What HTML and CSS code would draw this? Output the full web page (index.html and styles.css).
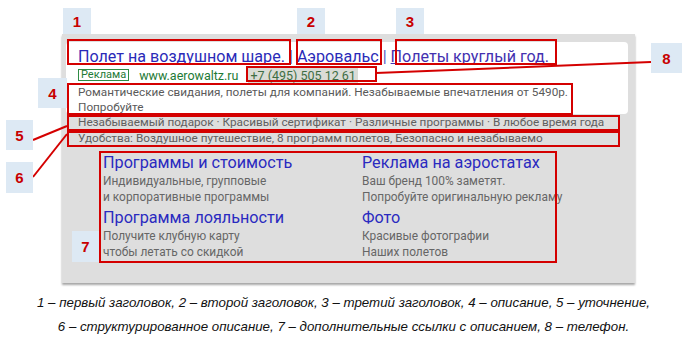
FILE: index.html
```html
<!DOCTYPE html>
<html lang="ru">
<head>
  <meta charset="UTF-8" />
  <meta name="viewport" content="width=device-width, initial-scale=1.0"/>
  <title>Объявление</title>
  <link rel="stylesheet" href="styles.css">
</head>
<body>
  <div class="figure">
    <div class="ad">
      <div class="ad-main">
        <div class="ad-title">
          <a class="t1">Полет на воздушном шаре.</a>
          <span class="sep">|</span>
          <a>Аэровальс</a>
          <span class="sep">|</span>
          <a class="t3">Полеты круглый год.</a>
        </div>
        <div class="ad-url">
          <span class="badge">Реклама</span>
          <span class="domain">www.aerowaltz.ru</span>
          <span class="phone">+7 (495) 505 12 61</span>
        </div>
        <p class="ad-desc">Романтические свидания, полеты для компаний. Незабываемые впечатления от 5490р.<br>Попробуйте</p>
      </div>
      <div class="ad-line">Незабываемый подарок · Красивый сертификат · Различные программы · В любое время года</div>
      <div class="ad-line">Удобства: Воздушное путешествие, 8 программ полетов, Безопасно и незабываемо</div>

      <div class="sitelinks">
        <div class="sitelink">
          <a>Программы и стоимость</a>
          <p>Индивидуальные, групповые<br>и корпоративные программы</p>
        </div>
        <div class="sitelink">
          <a>Реклама на аэростатах</a>
          <p>Ваш бренд 100% заметят.<br>Попробуйте оригинальную рекламу</p>
        </div>
        <div class="sitelink">
          <a>Программа лояльности</a>
          <p>Получите клубную карту<br>чтобы летать со скидкой</p>
        </div>
        <div class="sitelink">
          <a>Фото</a>
          <p>Красивые фотографии<br>Наших полетов</p>
        </div>
      </div>
    </div>

    <p class="caption">
      1 – первый заголовок, 2 – второй заголовок, 3 – третий заголовок, 4 – описание, 5 – уточнение,<br>
      6 – структурированное описание, 7 – дополнительные ссылки с описанием, 8 – телефон.
    </p>

    <!-- annotation overlay -->
    <svg class="lines" width="687" height="343">
      <line x1="376" y1="73" x2="651" y2="62" />
      <line x1="33" y1="140" x2="67" y2="126" />
      <line x1="33" y1="177" x2="67" y2="134" />
    </svg>
    <div class="box b1"></div>
    <div class="box b2"></div>
    <div class="box b3"></div>
    <div class="box b8"></div>
    <div class="box b4"></div>
    <div class="box b5"></div>
    <div class="box b6"></div>
    <div class="box b7"></div>

    <div class="num n1">1</div>
    <div class="num n2">2</div>
    <div class="num n3">3</div>
    <div class="num n8">8</div>
    <div class="num n4">4</div>
    <div class="num n5">5</div>
    <div class="num n6">6</div>
    <div class="num n7">7</div>
  </div>
</body>
</html>
```

FILE: styles.css
```css
body {
  margin: 0;
  background: #fff;
  font-family: Roboto, "Liberation Sans", sans-serif;
}

.figure {
  position: relative;
  width: 687px;
  height: 343px;
  overflow: hidden;
}

.ad {
  box-sizing: border-box;
  width: 573px;
  height: 249px;
  margin: 34px 0 0 62px;
  padding: 8px 7px 0 4px;
  background: #dedede;
  box-shadow: 0 2px 2px rgba(0,0,0,0.35);
}

.ad-main {
  box-sizing: border-box;
  height: 72px;
  padding: 5px 12px 0;
  background: #fff;
  border-radius: 4px;
}

.ad-title {
  font-size: 16.1px;
  line-height: 20px;
  white-space: nowrap;
  color: #2a2ab8;
}

.ad-title a {
  text-decoration: underline;
}

.ad-title .t3 {
  color: #4330b0;
}

.ad-title .sep {
  color: #5a5ac0;
}

.ad-url {
  display: flex;
  align-items: center;
  height: 16px;
  margin-top: 0;
  font-size: 12.5px;
  color: #1e7a36;
  white-space: nowrap;
}

.badge {
  box-sizing: border-box;
  height: 12px;
  padding: 0 2px;
  border: 1px solid #2f8c45;
  font-size: 11px;
  line-height: 10px;
}

.domain {
  margin-left: 10px;
}

.phone {
  margin-left: 10px;
  padding: 0 2px;
  background: #dadcd6;
  color: #3f6e45;
}

.ad-desc {
  margin: 2px 0 0;
  font-size: 11.75px;
  line-height: 15px;
  color: #5a5a5a;
}

.ad-line {
  padding-left: 12px;
  font-size: 11.75px;
  line-height: 16px;
  color: #606060;
  white-space: nowrap;
}

.sitelinks {
  display: grid;
  grid-template-columns: 259px 1fr;
  margin: 7px 0 0 37px;
}

.sitelink a {
  display: block;
  font-size: 16.2px;
  line-height: 20px;
  color: #2a2ac0;
}

.sitelink p {
  margin: 0 0 3px;
  font-size: 11.9px;
  line-height: 16px;
  color: #666;
}

.caption {
  margin: 8px 0 0;
  font-family: "Liberation Sans", sans-serif;
  font-style: italic;
  font-size: 13.3px;
  line-height: 24px;
  text-align: center;
  color: #111;
}

/* annotations */
.lines {
  position: absolute;
  left: 0;
  top: 0;
}

.lines line {
  stroke: #d40000;
  stroke-width: 2;
}

.box {
  position: absolute;
  box-sizing: border-box;
  border: 2px solid #d40000;
}

.b1 { left: 67px; top: 39px; width: 224px; height: 26px; }
.b2 { left: 296px; top: 39px; width: 86px; height: 26px; }
.b3 { left: 395px; top: 39px; width: 162px; height: 26px; }
.b8 { left: 246px; top: 66px; width: 131px; height: 16px; }
.b4 { left: 67px; top: 83px; width: 506px; height: 32px; }
.b5 { left: 67px; top: 115px; width: 553px; height: 16px; }
.b6 { left: 67px; top: 131px; width: 553px; height: 16px; }
.b7 { left: 99px; top: 151px; width: 458px; height: 112px; }

.num {
  position: absolute;
  display: flex;
  align-items: center;
  justify-content: center;
  background: #dde9f4;
  color: #c80000;
  font-family: "Liberation Sans", sans-serif;
  font-weight: bold;
  font-size: 15px;
}

.n1 { left: 63px; top: 8px; width: 28px; height: 26px; }
.n2 { left: 297px; top: 8px; width: 28px; height: 26px; }
.n3 { left: 396px; top: 8px; width: 28px; height: 26px; }
.n8 { left: 651px; top: 43px; width: 31px; height: 30px; }
.n4 { left: 38px; top: 78px; width: 29px; height: 30px; }
.n5 { left: 6px; top: 120px; width: 27px; height: 30px; }
.n6 { left: 6px; top: 162px; width: 27px; height: 31px; }
.n7 { left: 72px; top: 231px; width: 27px; height: 31px; }
```
